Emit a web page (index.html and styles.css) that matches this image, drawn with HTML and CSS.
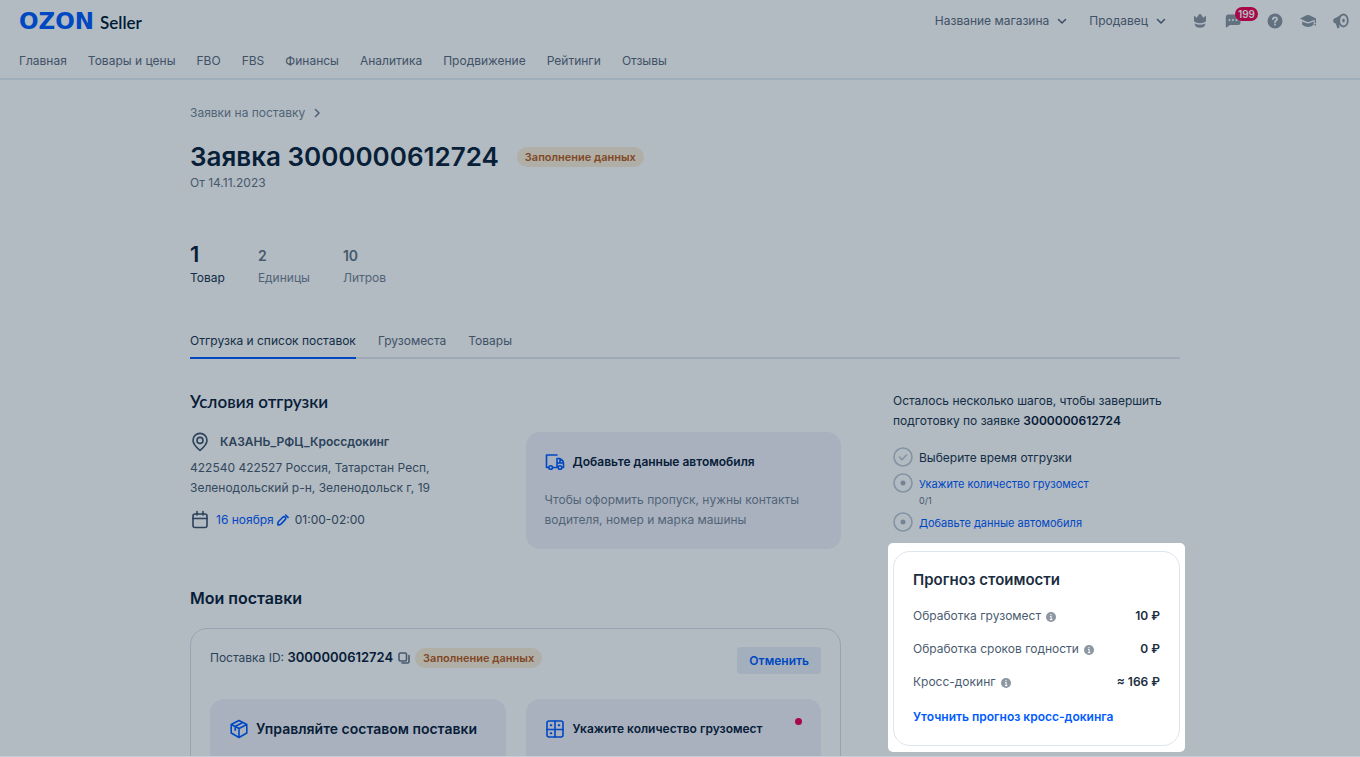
FILE: index.html
```html
<!DOCTYPE html>
<html lang="ru">
<head>
<meta charset="utf-8">
<title>Заявка 3000000612724 — Ozon Seller</title>
<link rel="stylesheet" href="styles.css">
</head>
<body>
<div class="page">
  <header class="header">
    <div class="topbar">
      <a class="logo" href="#"><span class="logo-brand">OZON</span><span class="logo-sub">Seller</span></a>
      <div class="account">
        <button class="picker" type="button">Название магазина
          <svg class="chevron" viewBox="0 0 10 10"><path d="M1.500 3.500 5 7l3.500-3.500"/></svg>
        </button>
        <button class="picker" type="button">Продавец
          <svg class="chevron" viewBox="0 0 10 10"><path d="M1.500 3.500 5 7l3.500-3.500"/></svg>
        </button>
      </div>
      <div class="tools">
        <button class="tool" type="button" aria-label="Премиум">
          <svg viewBox="0 0 16 16"><path d="M2 3Q3.600 3 4.700 5 5.400 2.600 8 .8 10.600 2.600 11.300 5 12.400 3 14 3V7.500Q13.800 9.200 12 9.600 8 10.800 4 9.600 2.200 9.200 2 7.500zM2.600 10.500Q8 13 13.400 10.500 13 14.800 8 14.800T2.600 10.500z"/></svg>
        </button>
        <button class="tool tool-chat" type="button" aria-label="Сообщения">
          <svg viewBox="0 0 16 16"><path fill-rule="evenodd" d="M3 1.500h10q2.500 0 2.500 2.500v5.500q0 2.500-2.500 2.500H5l-3.500 2.500H.8V4Q.8 1.500 3 1.500zM4.500 6a1 1 0 1 0 .01 0zM8 6a1 1 0 1 0 .01 0zM11.500 6a1 1 0 1 0 .01 0z"/></svg>
          <span class="counter">199</span>
        </button>
        <button class="tool" type="button" aria-label="Помощь">
          <svg viewBox="0 0 16 16"><circle cx="8" cy="8" r="7.500"/><path class="cut" d="M5.900 6.200Q6 4.400 8 4.400t2.100 1.700Q10.100 7.200 8.900 7.700 8 8.100 8 9.200"/><circle class="cut-dot" cx="8" cy="11.500" r="1"/></svg>
        </button>
        <button class="tool" type="button" aria-label="Обучение">
          <svg viewBox="0 0 16 16"><path d="M0 5.500 6.500 2.300q1.500-.6 3 0L16 5.500v4.700h-1.300V6.700L9.500 8.800q-1.500.6-3 0zM2.200 8.500 6 10q2 .8 4 0l3.600-1.500v3.200Q11 14 8 14t-5.800-2.300zM14.500 11h1.500v1.600h-1.500z"/></svg>
        </button>
        <button class="tool" type="button" aria-label="Новости">
          <svg viewBox="0 0 16 16"><path d="M0 7.500Q.2 5.200 3 4.800L8.500 1.500v12L5.800 11.600l1 2.900-2.400.9L2.800 10.500Q.2 10 0 7.500z"/><ellipse class="horn" cx="10.500" cy="7.500" rx="4.300" ry="6"/><ellipse cx="10.500" cy="7.500" rx="1.300" ry="2"/></svg>
        </button>
      </div>
    </div>
    <nav class="nav">
      <a href="#">Главная</a><a href="#">Товары и цены</a><a href="#">FBO</a><a href="#">FBS</a><a href="#">Финансы</a><a href="#">Аналитика</a><a href="#">Продвижение</a><a href="#">Рейтинги</a><a href="#">Отзывы</a>
    </nav>
  </header>

  <main class="main">
    <a class="crumb" href="#">Заявки на поставку
      <svg class="chevron" viewBox="0 0 10 10"><path d="M3.500 1.500 7 5 3.500 8.500"/></svg>
    </a>
    <div class="title-row">
      <h1 class="title">Заявка 3000000612724</h1>
      <span class="badge">Заполнение данных</span>
    </div>
    <p class="date">От 14.11.2023</p>

    <dl class="stats">
      <div class="stat stat-active"><dd>1</dd><dt>Товар</dt></div>
      <div class="stat"><dd>2</dd><dt>Единицы</dt></div>
      <div class="stat"><dd>10</dd><dt>Литров</dt></div>
    </dl>

    <div class="tabs" role="tablist">
      <button class="tab tab-active" type="button" role="tab" aria-selected="true">Отгрузка и список поставок</button>
      <button class="tab" type="button" role="tab" aria-selected="false">Грузоместа</button>
      <button class="tab" type="button" role="tab" aria-selected="false">Товары</button>
    </div>

    <div class="columns">
      <div class="content">
        <h2 class="heading heading-alt">Условия отгрузки</h2>
        <div class="halves">
          <section>
            <div class="place">
              <svg class="line-icon" viewBox="0 0 20 20"><path d="M10 18.500Q3 12.700 3 8.300a7 6.900 0 0 1 14 0Q17 12.700 10 18.500z"/><circle cx="10" cy="8.400" r="3"/></svg>
              КАЗАНЬ_РФЦ_Кроссдокинг
            </div>
            <p class="address">422540 422527 Россия, Татарстан Респ, Зеленодольский р-н, Зеленодольск г, 19</p>
            <div class="slot">
              <svg class="line-icon" viewBox="0 0 20 20"><rect x="3" y="4" width="14" height="13.500" rx="2"/><path d="M3 8.500h14M7 1.500V5M13 1.500V5"/></svg>
              <a class="slot-date" href="#">16 ноября
                <svg class="pencil" viewBox="0 0 12 12"><path d="M1 11q-.6-2.400.8-3.800L6 3q1.200-.8 2.200.2t.2 2.200L4.400 9.600Q3 11 1 11zM8.600 1l2.400 2.400"/></svg>
              </a>
              <span>01:00-02:00</span>
            </div>
          </section>
          <section class="tile">
            <h3 class="tile-title">
              <svg class="tile-icon" viewBox="0 0 20 20"><path d="M3.500 15.500H1.500V3h10.500M12 6.500V15.500H8M12 6.500h2.500q4 1.500 4 5v4h-1M12.500 11h5M15 7v4"/><circle cx="5.700" cy="15.500" r="1.800"/><circle cx="15" cy="15.500" r="1.800"/></svg>
              Добавьте данные автомобиля
            </h3>
            <p class="tile-text">Чтобы оформить пропуск, нужны контакты водителя, номер и марка машины</p>
          </section>
        </div>

        <h2 class="heading supplies">Мои поставки</h2>
        <section class="supply">
          <div class="supply-head">
            <div class="supply-id">
              <span>Поставка ID: <b>3000000612724</b></span>
              <button class="copy" type="button" aria-label="Скопировать">
                <svg viewBox="0 0 12 12"><rect x="1" y="1" width="7.500" height="8" rx="1.500"/><path d="M11 3.500V9.500q0 1.500-1.500 1.500H4"/></svg>
              </button>
              <span class="badge">Заполнение данных</span>
            </div>
            <button class="cancel" type="button">Отменить</button>
          </div>
          <div class="halves">
            <section class="tile tile-tall">
              <h3 class="tile-title tile-title-large">
                <svg class="tile-icon" viewBox="0 0 20 20"><path d="M10 1.500 17.800 5.500V14L10 18.500 2.200 14V5.500zM2.200 5.500 10 9.500l7.800-4M10 9.500v9M6.200 11.200V7.500l7.600-4"/></svg>
                Управляйте составом поставки
              </h3>
            </section>
            <section class="tile tile-tall">
              <h3 class="tile-title">
                <svg class="tile-icon" viewBox="0 0 20 20"><rect x="2" y="2" width="16" height="16" rx="2"/><path d="M10 2v16M2 10.500h16"/><path class="dots" d="M5.700 6.200h.6M13.700 6.200h.6M5.700 14.200h.6"/></svg>
                Укажите количество грузомест
              </h3>
              <span class="alert-dot"></span>
            </section>
          </div>
        </section>
      </div>

      <aside class="aside">
        <p class="remaining">Осталось несколько шагов, чтобы завершить подготовку по заявке <b>3000000612724</b></p>
        <ul class="steps">
          <li class="step">
            <svg class="mark" viewBox="0 0 20 20"><circle cx="10" cy="10" r="9"/><path d="M6.500 10l2.500 2.700 4.500-4.700"/></svg>
            <div class="step-text">Выберите время отгрузки</div>
          </li>
          <li class="step">
            <svg class="mark" viewBox="0 0 20 20"><circle cx="10" cy="10" r="9"/><circle class="mark-dot" cx="10" cy="10" r="2.500"/></svg>
            <div class="step-text"><a href="#">Укажите количество грузомест</a><small>0/1</small></div>
          </li>
          <li class="step">
            <svg class="mark" viewBox="0 0 20 20"><circle cx="10" cy="10" r="9"/><circle class="mark-dot" cx="10" cy="10" r="2.500"/></svg>
            <div class="step-text"><a href="#">Добавьте данные автомобиля</a></div>
          </li>
        </ul>
        <div class="spotlight">
          <section class="forecast">
            <h2 class="forecast-title">Прогноз стоимости</h2>
            <dl class="costs">
              <div class="cost"><dt>Обработка грузомест <svg class="info" viewBox="0 0 10 10"><circle cx="5" cy="5" r="5"/><path d="M4 4.500h1.200V7.500M3.800 7.600h2.600M5 2v1.300"/></svg></dt><dd>10 ₽</dd></div>
              <div class="cost"><dt>Обработка сроков годности <svg class="info" viewBox="0 0 10 10"><circle cx="5" cy="5" r="5"/><path d="M4 4.500h1.200V7.500M3.800 7.600h2.600M5 2v1.300"/></svg></dt><dd>0 ₽</dd></div>
              <div class="cost"><dt>Кросс-докинг <svg class="info" viewBox="0 0 10 10"><circle cx="5" cy="5" r="5"/><path d="M4 4.500h1.200V7.500M3.800 7.600h2.600M5 2v1.300"/></svg></dt><dd>≈ 166 ₽</dd></div>
            </dl>
            <a class="refine" href="#">Уточнить прогноз кросс-докинга</a>
          </section>
        </div>
      </aside>
    </div>
  </main>
</div>
</body>
</html>
```
FILE: styles.css
```css
* { box-sizing: border-box; }
body, h1, h2, h3, p, dl, dd, ul { margin: 0; padding: 0; }
body {
  background: #fff;
  color: #0b2239;
  font: 12px/20px Inter, "Noto Sans", sans-serif;
}
a { color: #005bff; text-decoration: none; }
button { margin: 0; padding: 0; border: 0; background: none; color: inherit; font: inherit; }
svg { display: block; flex: none; fill: none; stroke-linecap: round; stroke-linejoin: round; }
b { font-weight: 600; }

.page { height: 100vh; overflow: hidden; border-bottom: 1px solid #c4ccd6; }

.header { border-bottom: 2px solid #e6ecf4; padding: 0 11px 0 19px; }
.topbar { display: flex; align-items: center; height: 42px; color: #5c6c7c; }
.logo { display: flex; align-items: baseline; gap: 6px; margin-right: auto; padding-top: 2px; line-height: 24px; }
.logo-brand { font: bold 23px/24px "DejaVu Sans", sans-serif; color: #005bff; }
.logo-sub { font: 600 17px/24px Lato, sans-serif; color: #001a34; }
.account { display: flex; gap: 22px; margin-right: 26px; }
.picker { display: flex; align-items: center; gap: 8px; }
.chevron { width: 10px; height: 10px; stroke: currentColor; stroke-width: 1.6; }
.tools { display: flex; gap: 17px; color: #8d97a1; }
.tool { position: relative; width: 16px; height: 16px; }
.tool-chat { margin-right: 9px; }
.tool svg { width: 16px; height: 16px; fill: currentColor; }
.tool .cut { fill: none; stroke: #fff; stroke-width: 1.8; }
.cut-dot { fill: #fff; }
.horn { fill: #fff; stroke: #8d97a1; stroke-width: 1.8; }
.counter {
  position: absolute; left: 10px; top: -6px;
  width: 23px; height: 14px; border-radius: 7px;
  background: #f1004f; color: #fff;
  font-size: 10px; font-weight: 600; line-height: 14px; text-align: center;
}
.nav { display: flex; align-items: center; gap: 21px; height: 36px; padding-top: 2px; }
.nav a { color: #5c6c7c; }

.main { padding: 23px 180px 0 190px; }
.crumb { display: flex; align-items: center; gap: 7px; color: #758594; }
.title-row { display: flex; align-items: center; gap: 18px; margin-top: 16px; }
.title { font-size: 26px; line-height: 36px; font-weight: 600; }
.badge {
  padding: 0 8px; border-radius: 10px;
  background: #fdf0d8; color: #b95c1c;
  font-size: 11px; line-height: 20px; font-weight: 600;
}
.date { line-height: 16px; color: #667685; }

.stats { display: flex; gap: 33px; margin-top: 49px; }
.stat { display: flex; flex-direction: column; color: #758594; }
.stat dd { font-size: 14px; line-height: 32px; height: 28px; font-weight: 600; color: #667685; }
.stat-active { color: #20364d; }
.stat-active dd { font-size: 22px; line-height: 28px; color: #0b2239; }

.tabs { display: flex; gap: 22px; margin-top: 43px; border-bottom: 2px solid #e2e8f0; }
.tab { padding-bottom: 6px; border-bottom: 2px solid transparent; margin-bottom: -2px; color: #5c6c7c; }
.tab-active { border-color: #005bff; color: #20364d; }

.columns { display: grid; grid-template-columns: minmax(0, 1fr) 287px; gap: 52px; margin-top: 31px; }
.halves { display: grid; grid-template-columns: 1fr 1fr; gap: 20px; }
.heading { font-size: 16px; line-height: 24px; font-weight: 600; margin-bottom: 18px; }
.heading-alt { font-family: Lato, sans-serif; font-size: 17px; }
.supplies { margin-top: 37px; }

.place { display: flex; align-items: center; gap: 10px; font-weight: 600; color: #40536a; }
.line-icon { width: 20px; height: 20px; stroke: #40536a; stroke-width: 1.6; }
.address { max-width: 270px; margin-top: 6px; color: #4a5c70; }
.slot { display: flex; align-items: center; gap: 6px; margin-top: 12px; color: #40536a; }
.slot-date { display: flex; align-items: center; gap: 3px; }
.pencil { width: 12px; height: 12px; stroke: #005bff; stroke-width: 1.6; }

.tile { position: relative; padding: 20px 19px 19px; border-radius: 14px; background: #f3f3fb; }
.tile-tall { min-height: 117px; }
.tile-title { display: flex; align-items: center; gap: 8px; font-size: 12px; line-height: 20px; font-weight: 600; }
.tile-title-large { font-size: 14px; gap: 7px; }
.tile-icon { width: 20px; height: 20px; stroke: #005bff; stroke-width: 1.6; }
.dots { stroke-width: 2; }
.tile-text { margin-top: 18px; color: #758594; }
.alert-dot { position: absolute; right: 19px; top: 19px; width: 7px; height: 7px; border-radius: 50%; background: #f1004f; }

.supply { padding: 18px 19px; border: 1px solid #d9e1ea; border-radius: 17px; }
.supply-head { display: flex; justify-content: space-between; align-items: flex-start; margin-bottom: 25px; color: #40536a; }
.supply-id { display: flex; align-items: center; gap: 5px; }
.supply-id b { font-size: 13px; color: #0b2239; }
.copy svg { width: 12px; height: 12px; stroke: #667685; stroke-width: 1.6; }
.cancel { padding: 0 12px; border-radius: 4px; background: #eaf0f6; color: #005bff; line-height: 27px; font-weight: 600; }

.aside { padding-top: 1px; }
.remaining { color: #20364d; }
.remaining b { color: #0b2239; }
.steps { display: flex; flex-direction: column; gap: 5px; margin-top: 16px; list-style: none; }
.step { display: flex; gap: 6px; color: #20364d; }
.step a { display: block; font-size: 11px; }
.mark { width: 20px; height: 20px; stroke: #bdc8d4; stroke-width: 1.6; }
.mark-dot { fill: #a6b2c0; stroke: none; }
.step-text { padding-top: 1px; }
.step-text small { display: block; font-size: 9px; line-height: 13px; color: #667685; }

/* Everything outside the highlighted block is dimmed by its shadow. */
.spotlight {
  position: relative; z-index: 10;
  margin: 10px -5px 0; padding: 8px 5px 6px;
  border-radius: 5px; background: #fff;
  box-shadow: 0 0 0 200vmax rgba(0, 26, 52, .3);
}
.forecast { padding: 16px 19px 18px; border: 1px solid #dde5ee; border-radius: 17px; }
.forecast-title { font-size: 15px; line-height: 24px; font-weight: 600; color: #1b2d40; }
.costs { display: flex; flex-direction: column; gap: 13px; margin-top: 14px; }
.cost { display: flex; justify-content: space-between; }
.cost dt { display: flex; align-items: center; gap: 5px; color: #4a5c70; }
.cost dd { font-weight: 600; color: #1b2d40; }
.info { width: 10px; height: 10px; margin-top: 2px; fill: #8d97a1; }
.info path { fill: none; stroke: #fff; stroke-linecap: butt; }
.refine { display: block; margin-top: 15px; font-weight: 600; }
```
